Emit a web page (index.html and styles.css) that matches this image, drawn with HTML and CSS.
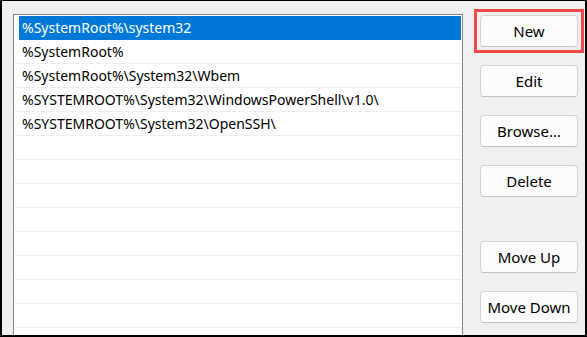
FILE: index.html
```html
<!DOCTYPE html>
<html>
<head>
<meta charset="utf-8">
<link rel="stylesheet" href="styles.css">
</head>
<body>
<div class="frame">
  <div class="list">
    <div class="row selected">%SystemRoot%\system32</div>
    <div class="row">%SystemRoot%</div>
    <div class="row">%SystemRoot%\System32\Wbem</div>
    <div class="row">%SYSTEMROOT%\System32\WindowsPowerShell\v1.0\</div>
    <div class="row">%SYSTEMROOT%\System32\OpenSSH\</div>
    <div class="row"></div>
    <div class="row"></div>
    <div class="row"></div>
    <div class="row"></div>
    <div class="row"></div>
    <div class="row"></div>
    <div class="row"></div>
    <div class="row"></div>
    <div class="row"></div>
  </div>
  <div class="buttons">
    <div class="ring"><button class="btn">New</button></div>
    <button class="btn">Edit</button>
    <button class="btn">Browse...</button>
    <button class="btn">Delete</button>
    <button class="btn spaced">Move Up</button>
    <button class="btn">Move Down</button>
  </div>
</div>
</body>
</html>
```
FILE: styles.css
```css
html, body {
  margin: 0;
  padding: 0;
  background: #ffffff;
}
.frame {
  box-sizing: border-box;
  width: 587px;
  height: 337px;
  border-style: solid;
  border-color: #000;
  border-width: 1px 2px 2px 2px;
  background: #f0f0f0;
  display: flex;
  align-items: flex-start;
  overflow: hidden;
  font-family: "Noto Sans", "Open Sans", sans-serif;
  font-size: 14px;
  color: #000;
}
.list {
  margin: 13px 0 0 11px;
  width: 446px;
  height: 360px;
  flex: none;
  background: #fff;
  border: 1px solid #828790;
  border-bottom: none;
  padding: 1px 1px 0 1px;
}
.row {
  height: 23px;
  line-height: 23px;
  border-bottom: 1px solid #efefef;
  padding-left: 7px;
  white-space: nowrap;
}
.row.selected {
  background: #0078d7;
  color: #fff;
  margin-left: 4px;
  padding-left: 3px;
  border-bottom-color: #0078d7;
}
.buttons {
  margin: 14px 0 0 17px;
  display: flex;
  flex-direction: column;
  gap: 18px;
}
.ring {
  margin: -6px;
  padding: 3px;
  border: 3px solid #f44848;
  display: flex;
}
.btn {
  box-sizing: border-box;
  width: 98px;
  height: 32px;
  background: #fbfbfb;
  border: 1px solid #d4d4d4;
  border-bottom-color: #c4c4c4;
  border-radius: 4px;
  font-family: "Noto Sans", "Open Sans", sans-serif;
  font-size: 15px;
  color: #000;
  padding: 0;
}
.btn.spaced {
  margin-top: 26px;
}
```
